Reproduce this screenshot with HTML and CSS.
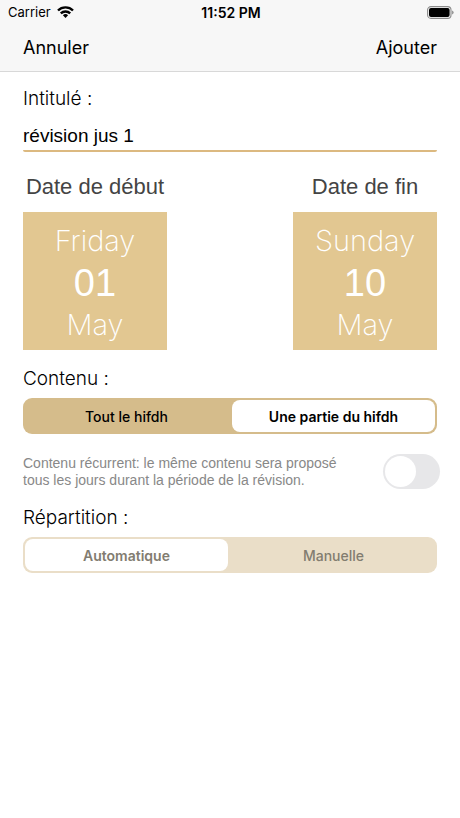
FILE: index.html
```html
<!DOCTYPE html>
<html lang="fr">
<head>
<meta charset="utf-8">
<meta name="viewport" content="width=device-width, initial-scale=1">
<title>Révision</title>
<link rel="stylesheet" href="styles.css">
</head>
<body>
<header class="top">
  <div class="status">
    <div class="carrier">
      <span>Carrier</span>
      <svg class="wifi" viewBox="0 0 17 12" aria-hidden="true">
        <g fill="none" stroke="#000" stroke-width="2.4">
          <path d="M1 4.5A10.6 10.6 0 0 1 16 4.5"/>
          <path d="M3.8 7.4A6.7 6.7 0 0 1 13.2 7.4"/>
        </g>
        <path d="M5.9 9.3a3.8 3.8 0 0 1 5.2 0L8.5 12z"/>
      </svg>
    </div>
    <time class="clock">11:52 PM</time>
    <svg class="battery" viewBox="0 0 27 13" aria-hidden="true">
      <rect x="0.6" y="0.6" width="23.4" height="11.8" rx="3.4" fill="none" stroke="#8b8b8b" stroke-width="1.1"/>
      <rect x="2" y="2" width="20.6" height="9" rx="2"/>
      <path d="M25 4.4q1.7.6 1.7 2.1T25 8.6z" fill="#999"/>
    </svg>
  </div>
  <nav class="nav">
    <button type="button">Annuler</button>
    <button type="button">Ajouter</button>
  </nav>
</header>
<main>
  <form class="form">
    <label class="label" for="title">Intitulé :</label>
    <input class="field" id="title" type="text" value="révision jus 1">
    <div class="dates">
      <div class="date">
        <h2 id="start">Date de début</h2>
        <button type="button" class="tile" aria-describedby="start"><span>Friday</span><span class="day">01</span><span>May</span></button>
      </div>
      <div class="date">
        <h2 id="end">Date de fin</h2>
        <button type="button" class="tile" aria-describedby="end"><span>Sunday</span><span class="day">10</span><span>May</span></button>
      </div>
    </div>
    <div class="label" id="content">Contenu :</div>
    <div class="segments" role="radiogroup" aria-labelledby="content">
      <label><input type="radio" name="content"><span>Tout le hifdh</span></label>
      <label><input type="radio" name="content" checked><span>Une partie du hifdh</span></label>
    </div>
    <div class="recurring">
      <label for="recurring">Contenu récurrent: le même contenu sera proposé tous les jours durant la période de la révision.</label>
      <input class="switch" id="recurring" type="checkbox" role="switch">
    </div>
    <div class="label" id="split">Répartition :</div>
    <div class="segments muted" role="radiogroup" aria-labelledby="split">
      <label><input type="radio" name="split" checked disabled><span>Automatique</span></label>
      <label><input type="radio" name="split" disabled><span>Manuelle</span></label>
    </div>
  </form>
</main>
</body>
</html>
```
FILE: styles.css
```css
* {
  box-sizing: border-box;
}

body {
  margin: 0;
  background: #fff;
  color: #000;
  font-family: "Liberation Sans", sans-serif;
}

button {
  border: 0;
  background: none;
  padding: 0;
  color: inherit;
  font: inherit;
}

.top {
  background: #f7f7f7;
  border-bottom: 1px solid #d8d8d8;
  font-family: Inter, sans-serif;
}

.status {
  display: grid;
  grid-template-columns: 1fr auto 1fr;
  align-items: center;
  height: 24px;
  padding: 0 6px 0 8px;
  font-size: 13px;
}

.carrier {
  display: flex;
  align-items: center;
  gap: 6px;
}

.wifi {
  width: 17px;
  height: 12px;
}

.clock {
  font-size: 14px;
  font-weight: 600;
}

.battery {
  justify-self: end;
  width: 27px;
  height: 13px;
}

.nav {
  display: flex;
  justify-content: space-between;
  height: 47px;
  padding: 0 23px;
  font-size: 18px;
}

.form {
  padding: 15px 23px;
}

.label {
  display: block;
  font-family: Inter, sans-serif;
  font-size: 19px;
  font-weight: 300;
  line-height: 24px;
}

.field {
  display: block;
  width: 100%;
  height: 41px;
  padding: 11px 0 0;
  border: 0;
  border-bottom: 2px solid #dcb980;
  border-radius: 2px;
  background: none;
  color: #000;
  font: 19px "Liberation Sans", sans-serif;
  outline: 0;
}

.dates {
  display: flex;
  justify-content: space-between;
  margin: 21px 0 17px;
}

.date {
  width: 144px;
}

.date h2 {
  margin: 0 0 11px;
  color: #444;
  font-size: 22px;
  font-weight: 400;
  line-height: 28px;
  text-align: center;
  white-space: nowrap;
}

.tile {
  display: flex;
  flex-direction: column;
  align-items: center;
  justify-content: center;
  width: 100%;
  height: 138px;
  padding-top: 4px;
  background: #e2c791;
  color: #fff;
  font-family: Inter, sans-serif;
  font-size: 29px;
  font-weight: 200;
  line-height: 42px;
}

.day {
  font-family: "Liberation Sans", sans-serif;
  font-size: 38px;
  font-weight: 400;
}

.segments {
  display: grid;
  grid-template-columns: 1fr 1fr;
  gap: 4px;
  height: 36px;
  margin-top: 7px;
  padding: 2px;
  border-radius: 9px;
  background: #d5bc8b;
  font-family: Inter, sans-serif;
  font-size: 14px;
  font-weight: 500;
}

.segments label {
  position: relative;
  display: flex;
}

.segments input {
  position: absolute;
  opacity: 0;
}

.segments span {
  display: flex;
  flex: 1;
  align-items: center;
  justify-content: center;
  border-radius: 8px;
}

.segments input:checked + span {
  background: #fff;
  font-weight: 600;
}

.muted {
  background: #eadec8;
  color: #827c70;
}

.recurring {
  display: flex;
  align-items: center;
  justify-content: space-between;
  gap: 24px;
  margin: 20px -3px 17px 0;
  color: #888;
  font-size: 14px;
  line-height: 17px;
}

.switch {
  display: flex;
  flex: none;
  appearance: none;
  width: 57px;
  height: 35px;
  margin: 0;
  padding: 2px;
  border-radius: 18px;
  background: #e7e7e9;
}

.switch::before {
  content: "";
  width: 31px;
  height: 31px;
  border-radius: 50%;
  background: #fff;
}

.switch:checked {
  justify-content: flex-end;
  background: #d5bc8b;
}
```
